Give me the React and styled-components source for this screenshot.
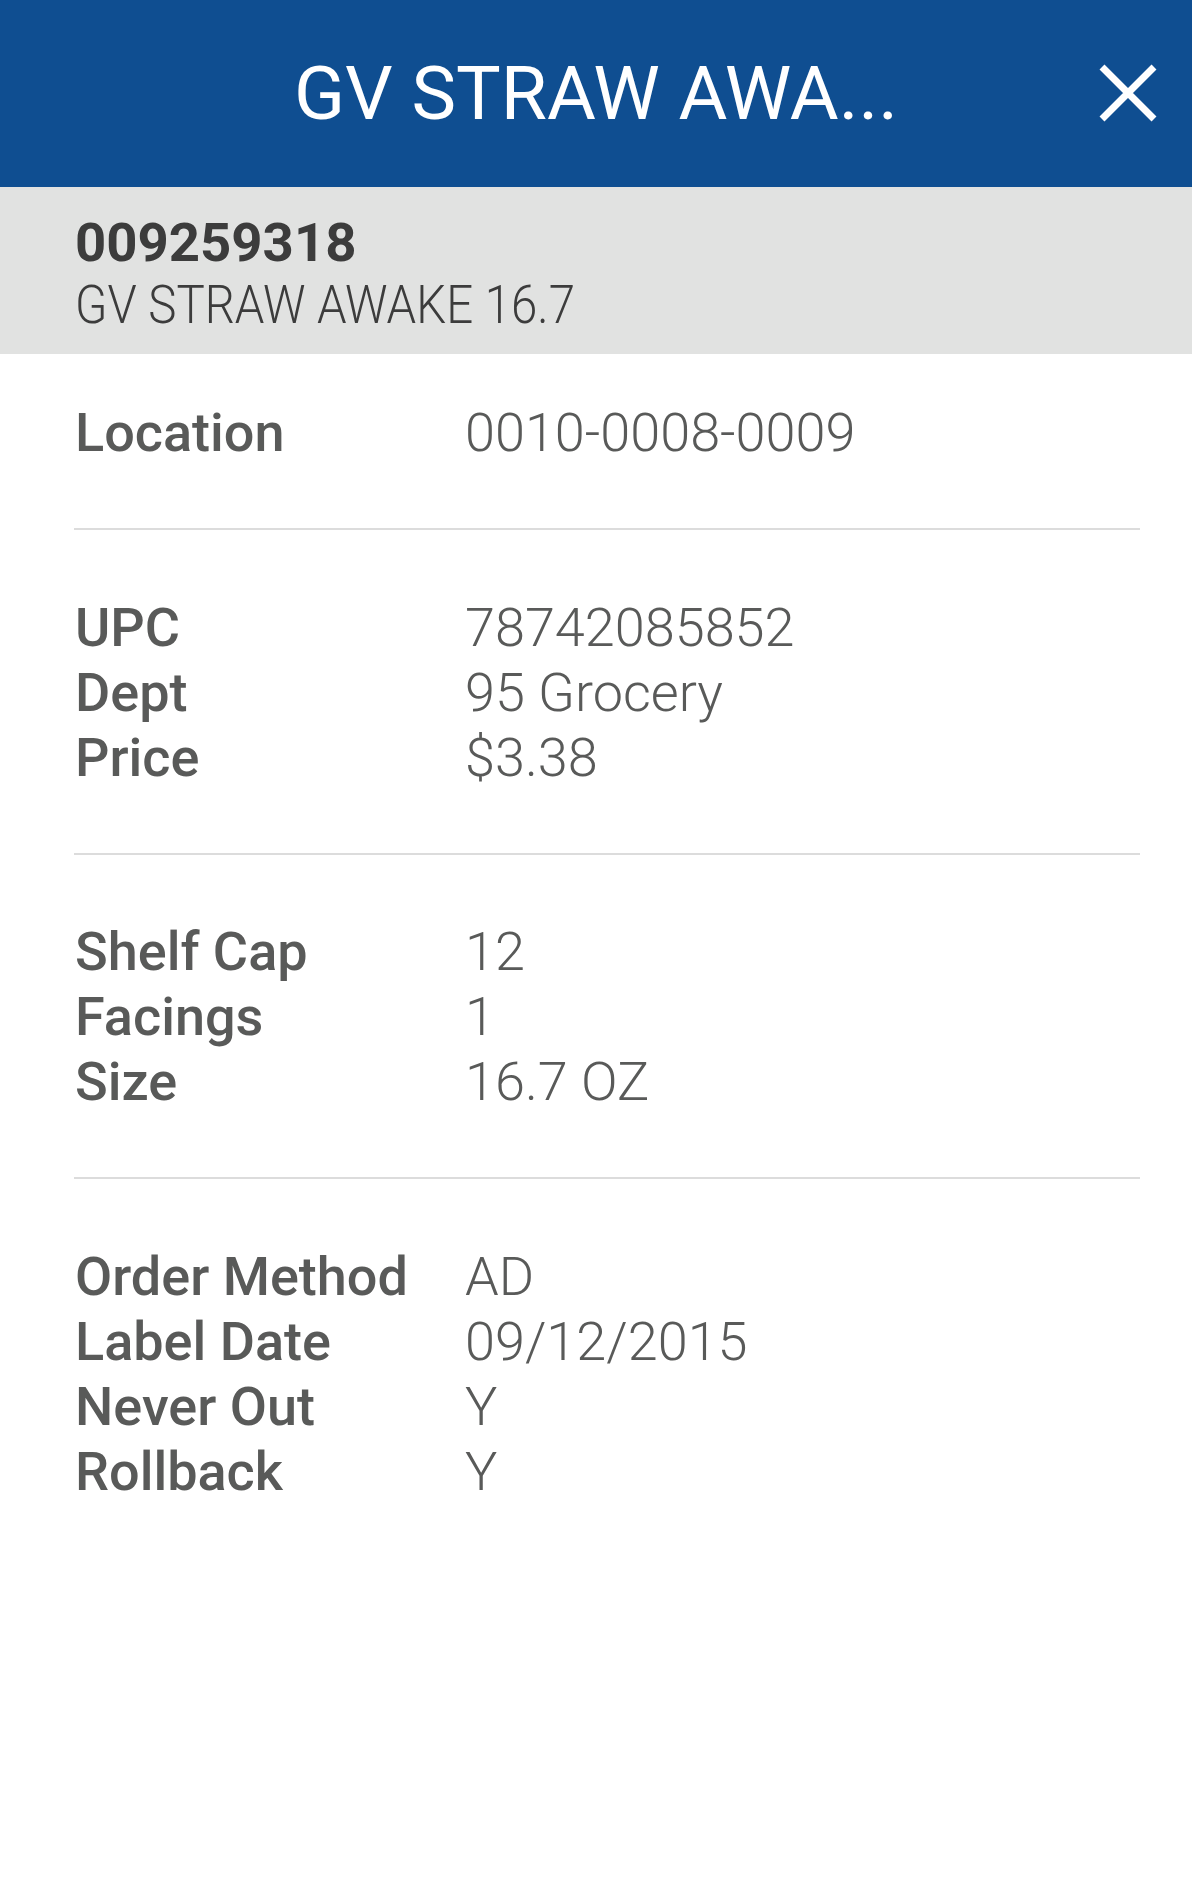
import React from 'react'
import styled, { createGlobalStyle } from 'styled-components'

const sections = [
  [['Location', '0010-0008-0009']],
  [['UPC', '78742085852'], ['Dept', '95 Grocery'], ['Price', '$3.38']],
  [['Shelf Cap', '12'], ['Facings', '1'], ['Size', '16.7 OZ']],
  [['Order Method', 'AD'], ['Label Date', '09/12/2015'], ['Never Out', 'Y'], ['Rollback', 'Y']],
]

export default function App() {
  return (
    <Page>
      <GlobalStyle />
      <Header>
        <Title>GV STRAW AWA...</Title>
        <Close aria-label="close">
          <svg width="58" height="58" viewBox="0 0 58 58">
            <path d="M3 3 L55 55 M55 3 L3 55" stroke="#fff" strokeWidth="7" />
          </svg>
        </Close>
      </Header>
      <ItemBand>
        <ItemNumber>009259318</ItemNumber>
        <ItemName>GV STRAW AWAKE 16.7</ItemName>
      </ItemBand>
      <Details>
        {sections.map((rows, i) => (
          <Section key={i} first={i === 0} last={i === sections.length - 1}>
            {rows.map(([label, value]) => (
              <Row key={label}>
                <Label>{label}</Label>
                <Value>{value}</Value>
              </Row>
            ))}
          </Section>
        ))}
      </Details>
    </Page>
  )
}

/* ------- STYLING ------- */

const GlobalStyle = createGlobalStyle`
  body {
    margin: 0;
    background: #fff;
    font-family: Roboto, "Noto Sans", sans-serif;
  }
`
const Page = styled.div`
  width: 1192px;
  min-height: 1883px;
  background: #fff;
`
const Header = styled.header`
  position: relative;
  height: 187px;
  background-color: #0f4e91;
  display: flex;
  align-items: center;
  justify-content: center;
`
const Title = styled.h1`
  margin: 0;
  font-size: 75px;
  font-weight: 400;
  color: #fff;
  line-height: 1;
`
const Close = styled.button`
  position: absolute;
  right: 35px;
  top: 64px;
  padding: 0;
  border: 0;
  background: none;
  display: flex;
`
const ItemBand = styled.div`
  height: 167px;
  box-sizing: border-box;
  padding: 24px 75px 0;
  background-color: #e1e2e1;
  color: #3c3c3c;
`
const ItemNumber = styled.div`
  font-size: 54.5px;
  line-height: 63px;
  font-weight: 700;
`
const ItemName = styled.div`
  font-size: 53px;
  line-height: 63px;
  font-weight: 300;
  transform: scaleX(0.895);
  transform-origin: left center;
  white-space: nowrap;
`
const Details = styled.div`
  padding: 0 52px 0 74px;
`
const Section = styled.section`
  padding: ${p => (p.first ? '46px' : '64.5px')} 0 63px;
  border-bottom: ${p => (p.last ? 'none' : '2px solid #dcdcdc')};
`
const Row = styled.div`
  display: grid;
  grid-template-columns: 391px 1fr;
  font-size: 54px;
  line-height: 65px;
  color: #595a59;
`
const Label = styled.span`
  padding-left: 1px;
  font-weight: 500;
`
const Value = styled.span`
  font-weight: 300;
`
